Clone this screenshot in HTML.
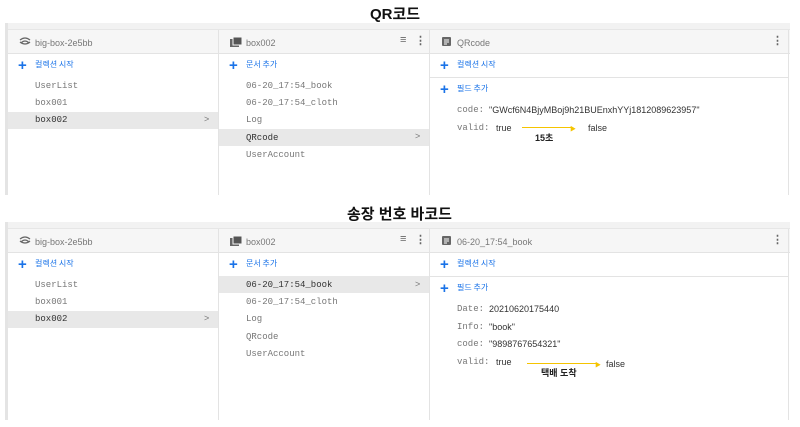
<!DOCTYPE html>
<html><head><meta charset="utf-8"><style>
*{margin:0;padding:0;box-sizing:border-box}
body{width:800px;height:427px;background:#fff;position:relative;overflow:hidden;font-family:"Liberation Sans","Noto Sans CJK KR",sans-serif}
.t{position:absolute;white-space:nowrap}
.title{font-weight:bold;font-size:15px;color:#111;font-family:"Liberation Sans","Noto Sans CJK KR",sans-serif}
.panel{position:absolute;left:5px;width:785px;border-left:3px solid #e4e4e4}
.strip{position:absolute;left:0;right:0;top:0;height:7px;background:#f2f2f2;border-bottom:1px solid #e6e6e6}
.hdr{position:absolute;left:0;right:0;top:7px;height:24px;background:#f6f6f6;border-bottom:1px solid #e3e3e3}
.vl{position:absolute;width:1px;background:#e3e3e3;top:7px;bottom:0}
.mono{font-family:"Liberation Mono","DejaVu Sans Mono",monospace;font-size:9px;color:#777}
.h{font-size:9px;color:#777}
.blue{color:#1a73e8;font-size:8px;font-family:"Noto Sans CJK KR",sans-serif}
.plus{position:absolute;color:#1a73e8;font-size:15px;line-height:10px;font-weight:bold}
.sel{position:absolute;height:17px;background:#e8e8e8}
.dark{color:#333}
.val{font-size:9px;color:#333}
</style></head><body>
<div class="t title" style="left:370px;top:3px">QR코드</div>
<div class="t title" style="left:347px;top:203px">송장 번호 바코드</div>

<!-- panel 1 -->
<div class="panel" style="top:23px;height:172px">
<div class="strip"></div><div class="hdr"></div>
<div class="vl" style="left:210px"></div><div class="vl" style="left:421px"></div><div class="vl" style="left:780px"></div>
<svg class="t" style="left:11px;top:14px" width="12" height="10" viewBox="0 0 12 10"><path d="M1 3Q6 -1 11 3M2.5 5.5Q6 2.5 9.5 5.5M1 5Q6 9 11 5" stroke="#666" stroke-width="1.3" fill="none"/></svg>
<div class="t h" style="left:27px;top:15px">big-box-2e5bb</div>
<svg class="t" style="left:222px;top:14px" width="12" height="10"><rect x="0" y="2" width="9" height="8" fill="#666"/><rect x="3" y="0" width="9" height="8" fill="#555" stroke="#f6f6f6"/></svg>
<div class="t h" style="left:238px;top:15px">box002</div>
<div class="t" style="left:392px;top:11px;font-size:11px;color:#666">≡</div>
<div class="t" style="left:407px;top:11px;font-size:11px;color:#666;font-weight:bold">⋮</div>
<svg class="t" style="left:434px;top:14px" width="10" height="10"><rect width="9" height="9" rx="1" fill="#666"/><path d="M2 3h5M2 5h5M2 7h3" stroke="#fff"/></svg>
<div class="t h" style="left:449px;top:15px">QRcode</div>
<div class="t" style="left:764px;top:11px;font-size:11px;color:#666;font-weight:bold">⋮</div>
<!-- col1 -->
<div class="plus" style="left:10px;top:38px">+</div><div class="t blue" style="left:27px;top:36px">컬렉션 시작</div>
<div class="t mono" style="left:27px;top:58px">UserList</div>
<div class="t mono" style="left:27px;top:75px">box001</div>
<div class="sel" style="left:0;width:210px;top:89px"></div>
<div class="t mono dark" style="left:27px;top:92px">box002</div>
<div class="t h" style="left:196px;top:91px">&gt;</div>
<!-- col2 -->
<div class="plus" style="left:221px;top:38px">+</div><div class="t blue" style="left:238px;top:36px">문서 추가</div>
<div class="t mono" style="left:238px;top:58px">06-20_17:54_book</div>
<div class="t mono" style="left:238px;top:75px">06-20_17:54_cloth</div>
<div class="t mono" style="left:238px;top:92px">Log</div>
<div class="sel" style="left:211px;width:210px;top:106px"></div>
<div class="t mono dark" style="left:238px;top:110px">QRcode</div>
<div class="t h" style="left:407px;top:108px">&gt;</div>
<div class="t mono" style="left:238px;top:127px">UserAccount</div>
<!-- col3 -->
<div class="plus" style="left:432px;top:38px">+</div><div class="t blue" style="left:449px;top:36px">컬렉션 시작</div>
<div style="position:absolute;left:422px;width:358px;top:54px;height:1px;background:#e3e3e3"></div>
<div class="plus" style="left:432px;top:62px">+</div><div class="t blue" style="left:449px;top:60px">필드 추가</div>
<div class="t mono" style="left:449px;top:82px">code:</div><div class="t val" style="left:481px;top:82px">"GWcf6N4BjyMBoj9h21BUEnxhYYj1812089623957"</div>
<div class="t mono" style="left:449px;top:100px">valid:</div><div class="t val" style="left:488px;top:100px">true</div>
<div style="position:absolute;left:514px;top:104px;width:50px;height:1px;background:#f5c400"></div>
<div class="t" style="left:562px;top:101px;font-size:6px;color:#f5c400">▶</div>
<div class="t val" style="left:580px;top:100px">false</div>
<div class="t" style="left:527px;top:108px;font-size:9px;font-weight:bold;color:#222">15초</div>
</div>

<!-- panel 2 -->
<div class="panel" style="top:222px;height:198px">
<div class="strip"></div><div class="hdr"></div>
<div class="vl" style="left:210px"></div><div class="vl" style="left:421px"></div><div class="vl" style="left:780px"></div>
<svg class="t" style="left:11px;top:14px" width="12" height="10" viewBox="0 0 12 10"><path d="M1 3Q6 -1 11 3M2.5 5.5Q6 2.5 9.5 5.5M1 5Q6 9 11 5" stroke="#666" stroke-width="1.3" fill="none"/></svg>
<div class="t h" style="left:27px;top:15px">big-box-2e5bb</div>
<svg class="t" style="left:222px;top:14px" width="12" height="10"><rect x="0" y="2" width="9" height="8" fill="#666"/><rect x="3" y="0" width="9" height="8" fill="#555" stroke="#f6f6f6"/></svg>
<div class="t h" style="left:238px;top:15px">box002</div>
<div class="t" style="left:392px;top:11px;font-size:11px;color:#666">≡</div>
<div class="t" style="left:407px;top:11px;font-size:11px;color:#666;font-weight:bold">⋮</div>
<svg class="t" style="left:434px;top:14px" width="10" height="10"><rect width="9" height="9" rx="1" fill="#666"/><path d="M2 3h5M2 5h5M2 7h3" stroke="#fff"/></svg>
<div class="t h" style="left:449px;top:15px">06-20_17:54_book</div>
<div class="t" style="left:764px;top:11px;font-size:11px;color:#666;font-weight:bold">⋮</div>
<div class="plus" style="left:10px;top:38px">+</div><div class="t blue" style="left:27px;top:36px">컬렉션 시작</div>
<div class="t mono" style="left:27px;top:58px">UserList</div>
<div class="t mono" style="left:27px;top:75px">box001</div>
<div class="sel" style="left:0;width:210px;top:89px"></div>
<div class="t mono dark" style="left:27px;top:92px">box002</div>
<div class="t h" style="left:196px;top:91px">&gt;</div>
<div class="plus" style="left:221px;top:38px">+</div><div class="t blue" style="left:238px;top:36px">문서 추가</div>
<div class="sel" style="left:211px;width:210px;top:54px"></div>
<div class="t mono dark" style="left:238px;top:58px">06-20_17:54_book</div>
<div class="t h" style="left:407px;top:57px">&gt;</div>
<div class="t mono" style="left:238px;top:75px">06-20_17:54_cloth</div>
<div class="t mono" style="left:238px;top:92px">Log</div>
<div class="t mono" style="left:238px;top:110px">QRcode</div>
<div class="t mono" style="left:238px;top:127px">UserAccount</div>
<div class="plus" style="left:432px;top:38px">+</div><div class="t blue" style="left:449px;top:36px">컬렉션 시작</div>
<div style="position:absolute;left:422px;width:358px;top:54px;height:1px;background:#e3e3e3"></div>
<div class="plus" style="left:432px;top:62px">+</div><div class="t blue" style="left:449px;top:60px">필드 추가</div>
<div class="t mono" style="left:449px;top:82px">Date:</div><div class="t val" style="left:481px;top:82px">20210620175440</div>
<div class="t mono" style="left:449px;top:100px">Info:</div><div class="t val" style="left:481px;top:100px">"book"</div>
<div class="t mono" style="left:449px;top:117px">code:</div><div class="t val" style="left:481px;top:117px">"9898767654321"</div>
<div class="t mono" style="left:449px;top:135px">valid:</div><div class="t val" style="left:488px;top:135px">true</div>
<div style="position:absolute;left:519px;top:141px;width:70px;height:1px;background:#f5c400"></div>
<div class="t" style="left:587px;top:138px;font-size:6px;color:#f5c400">▶</div>
<div class="t val" style="left:598px;top:137px">false</div>
<div class="t" style="left:533px;top:144px;font-size:9px;font-weight:bold;color:#222">택배 도착</div>
</div>
</body></html>
